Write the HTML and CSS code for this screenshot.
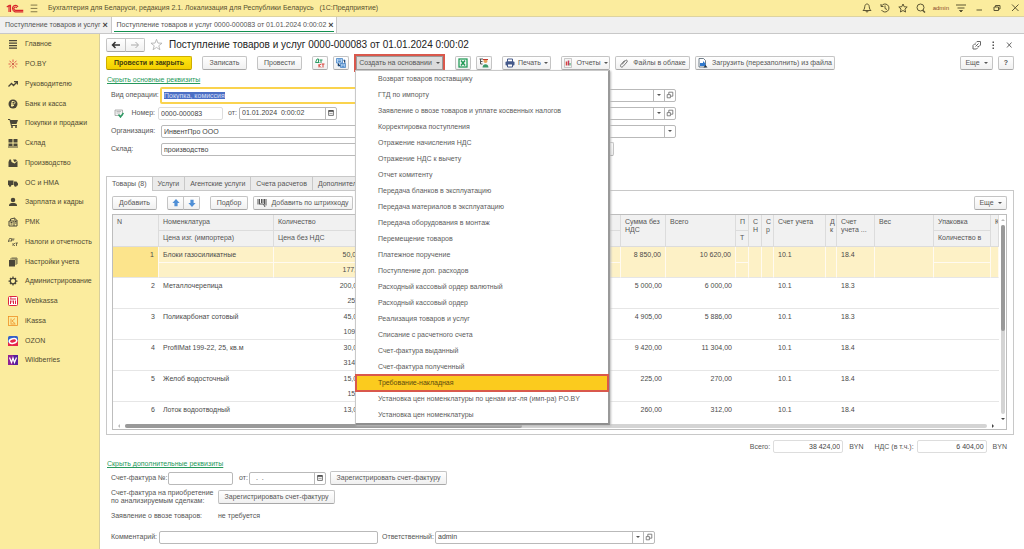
FILE: index.html
```html
<!DOCTYPE html>
<html lang="ru">
<head>
<meta charset="utf-8">
<title>Поступление товаров и услуг</title>
<link rel="stylesheet" href="styles.css">
</head>
<body>
<header class="titlebar">
  <svg class="logo" viewBox="0 0 48 24" fill="none" stroke="#d8232a" stroke-width="3"><path d="M2 8l6-4v17M12 8V4l-4 2M12 5v16M32 8c-2-4-6-5-9-4-8 3-7 15 1 17h22M29 10c-5-5-10 1-7 5 1 2 3 2 4 2h20"/></svg>
  <svg class="i12" viewBox="0 0 12 12" stroke="#6b6238"><path d="M2 2.500h8M2 6.500h8M2 10.500h8"/></svg>
  <span class="apptitle">Бухгалтерия для Беларуси, редакция 2.1. Локализация для Республики Беларусь &nbsp; (1С:Предприятие)</span>
  <span class="grow"></span>
  <div class="sys">
    <svg class="i10" viewBox="0 0 20 20" fill="none" stroke="#5d5633" stroke-width="2"><path d="M2 15h16c-4-3-3-7-4-10-1-4-7-4-8 0-1 3 0 7-4 10zM8 16c0 3 4 3 4 0"/></svg>
    <svg class="i10" viewBox="0 0 20 20" fill="none" stroke="#5d5633" stroke-width="2"><path d="M3 6a8 8 0 1 1 0 8M2 2v5h5M10 5v6l4 2"/></svg>
    <svg class="i10" viewBox="0 0 20 20" fill="none" stroke="#5d5633" stroke-width="2"><path d="M10 2l2.400 5.500 6 .6-4.500 4 1.300 6L10 15l-5.200 3 1.300-6-4.500-4 6-.6z"/></svg>
    <svg class="i10" viewBox="0 0 20 20" fill="none" stroke="#5d5633" stroke-width="2"><circle cx="9" cy="9" r="7"/><path d="M13 14l5 5" stroke-width="3"/></svg>
    <span class="user">admin</span>
    <svg class="i10" viewBox="0 0 20 20" stroke="#5d5633" stroke-width="2"><path d="M0 4h20M3 10h14"/><path d="M7 15h6l-3 3z" fill="#5d5633"/></svg>
    <svg class="i10" viewBox="0 0 20 20" stroke="#5d5633" stroke-width="2"><path d="M5 14h11"/></svg>
    <svg class="i10" viewBox="0 0 20 20" fill="none" stroke="#5d5633" stroke-width="2"><path d="M4 8h9v7H4zM7 8V5h9v7h-3"/></svg>
    <svg class="i10" viewBox="0 0 20 20" stroke="#5d5633" stroke-width="2"><path d="M4 3l13 13M17 3L4 16"/></svg>
  </div>
</header>
<div class="tabs">
  <div class="tab"><span>Поступление товаров и услуг</span><button class="close" aria-label="Закрыть">×</button></div>
  <div class="tab active"><span>Поступление товаров и услуг 0000-000083 от 01.01.2024 0:00:02</span><button class="close" aria-label="Закрыть">×</button></div>
</div>
<div class="layout">
<nav class="side">
  <a href="#"><svg viewBox="0 0 20 20" stroke="#4a4638" stroke-width="2.500"><path d="M2 3h16M2 8h16M2 13h16M2 18h16"/></svg>Главное</a>
  <a href="#"><svg viewBox="0 0 20 20" stroke="#e05a4a" stroke-width="2"><path d="M10 1v5M10 14v5M1 10h4M15 10h4M3 4l4 3M13 13l4 3M17 4l-4 3M3 16l4-3"/><circle cx="10" cy="10" r="1.500"/></svg>PO.BY</a>
  <a href="#"><svg viewBox="0 0 20 20" fill="none" stroke="#4a4638" stroke-width="2.500"><path d="M1 15l6-6 4 4 7-7M12 5h7v6"/></svg>Руководителю</a>
  <a href="#"><svg viewBox="0 0 20 20"><circle cx="10" cy="10" r="9" fill="#4a4638"/><path d="M8 16V5h3c4 0 4 5 0 5H6M6 13h6" fill="none" stroke="#fbec9e" stroke-width="2"/></svg>Банк и касса</a>
  <a href="#"><svg viewBox="0 0 20 20" fill="#4a4638"><path d="M0 2h4l1 2h15l-3 8H7l1 2h10v2H6L3 4H0z"/><circle cx="8" cy="18" r="2"/><circle cx="16" cy="18" r="2"/></svg>Покупки и продажи</a>
  <a href="#"><svg viewBox="0 0 20 20" fill="#4a4638"><path d="M1 2h8v7H1zM11 2h8v7h-8zM1 11h8v5H1zM11 11h8v5h-8zM0 17h20v2H0z"/></svg>Склад</a>
  <a href="#"><svg viewBox="0 0 20 20" fill="#4a4638"><path d="M1 18V8l2-5h3l1 5 6 3 6-5v12zM10 3h6l2 3-5 2z"/></svg>Производство</a>
  <a href="#"><svg viewBox="0 0 20 20" fill="#4a4638"><path d="M0 5h11v9H0zM12 7h5l3 4v4h-8z"/><circle cx="4" cy="15" r="2.500"/><circle cx="15" cy="15" r="2.500"/></svg>ОС и НМА</a>
  <a href="#"><svg viewBox="0 0 20 20" fill="#4a4638"><circle cx="10" cy="6" r="4.500"/><path d="M2 18c0-6 4-6 8-6s8 0 8 6z"/></svg>Зарплата и кадры</a>
  <a href="#"><svg viewBox="0 0 20 20" fill="none" stroke="#4a4638" stroke-width="2"><path d="M2 8h10v10H2zM5 8V4l9-2v3M12 6h6v12h-6M5 11h4M5 14h4M14 9h3M14 12h3"/></svg>РМК</a>
  <a href="#"><svg viewBox="0 0 20 20" fill="none" stroke="#4a4638" stroke-width="1.500"><path d="M1 10V8l2-5h4v5M1 8h7M8 4h5M10 4v4M10 12v6M14 12l-3 3 3 3M15 12h5M17 12v6"/></svg>Налоги и отчетность</a>
  <a href="#"><svg viewBox="0 0 20 20" fill="#4a4638"><path d="M2 6h12v13H2z"/><path d="M4 4h12v12M7 2h11v12" fill="none" stroke="#4a4638" stroke-width="1.500"/></svg>Настройки учета</a>
  <a href="#"><svg viewBox="0 0 20 20" fill="none" stroke="#4a4638"><circle cx="10" cy="10" r="5.500" stroke-width="2.500"/><path d="M10 1v3M10 16v3M1 10h3M16 10h3M4 4l2 2M14 14l2 2M16 4l-2 2M4 16l2-2" stroke-width="2.500"/></svg>Администрирование</a>
  <a href="#"><svg viewBox="0 0 20 20"><rect x="1" y="1" width="18" height="18" rx="2" fill="#fff" stroke="#dc2440" stroke-width="2"/><path d="M4 6h12M5 9v7M8 9v4M11 9v7M15 9v7M4 4h3" stroke="#dc2440" stroke-width="2"/></svg>Webkassa</a>
  <a href="#"><svg viewBox="0 0 20 20" fill="none" stroke="#ee8a1c"><rect x="1" y="1" width="18" height="18" stroke-width="1.500"/><path d="M6 5v10M14 5l-6 5 6 5M5 16h10" stroke-width="1.500"/></svg>iKassa</a>
  <a href="#"><svg viewBox="0 0 20 20"><rect width="20" height="20" rx="3" fill="#3560c8"/><path d="M0 13l20-4v11H0z" fill="#e6244a"/><ellipse cx="10" cy="10" rx="7.500" ry="4.500" fill="#e6244a" stroke="#fff" stroke-width="3" transform="rotate(-12 10 10)"/></svg>OZON</a>
  <a href="#"><svg viewBox="0 0 20 20"><rect width="20" height="20" fill="#8e2196"/><path d="M10 0h10v20H10z" fill="#5a1f9c"/><path d="M3 5l4 10 3-9 3 9 4-10" fill="none" stroke="#fff" stroke-width="2.500"/></svg>Wildberries</a>
</nav>
<main class="main">
  <div class="heading">
    <div class="pair"><button class="btn" aria-label="Назад"><svg class="i10" viewBox="0 0 20 20" fill="none" stroke="#333" stroke-width="3"><path d="M18 10H4M9 4l-6 6 6 6"/></svg></button><button class="btn" aria-label="Вперед"><svg class="i10" viewBox="0 0 20 20" fill="none" stroke="#aaa" stroke-width="2"><path d="M2 10h14M11 4l6 6-6 6"/></svg></button></div>
    <svg class="star" viewBox="0 0 20 20" fill="none" stroke="#b0b0b0" stroke-width="1.300"><path d="M10 2l2.200 5.800 6.300.2-5 3.900 1.800 6.100L10 14.500 4.700 18l1.800-6.100-5-3.900 6.300-.2z"/></svg>
    <h1>Поступление товаров и услуг 0000-000083 от 01.01.2024 0:00:02</h1>
    <span class="grow"></span>
    <div class="winicons">
      <svg class="i10" viewBox="0 0 20 20" fill="none" stroke="#666" stroke-width="2"><path d="M8 5l2-2h7v7l-3 3h-3M12 15l-3 3H2v-7l3-3h3M7 13l6-6"/></svg>
      <svg class="i10" viewBox="0 0 20 20" fill="#555"><path d="M9 3h3v3H9zM9 9h3v3H9zM9 15h3v3H9z"/></svg>
      <svg class="i10" viewBox="0 0 20 20" stroke="#666" stroke-width="2"><path d="M6 5l9 10M15 5L6 15"/></svg>
    </div>
  </div>
  <div class="toolbar">
    <button class="btn primary w86">Провести и закрыть</button>
    <button class="btn w45 ml">Записать</button>
    <button class="btn w45 ml">Провести</button>
    <button class="btn sq ml" aria-label="Проводки"><svg class="i10" viewBox="0 0 20 20" fill="none" stroke-width="2"><path d="M1 9l3-7h3v7M1 9h8M9 4h6M12 4v6" stroke="#2a9b63"/><path d="M8 12v7M12 12l-4 3 4 4M13 12h6M16 12v7" stroke="#d8433a"/></svg></button>
    <button class="btn sq" aria-label="Структура"><svg class="i10" viewBox="0 0 20 20" stroke="#3f7fc4" stroke-width="1.500"><path d="M1 1h12v9H1zM9 11h10v8H9z" fill="#bcd8f2"/><path d="M4 4h6M4 7h6M4 10v6h5M15 4h3v7M11 14h6M11 17h6"/></svg></button>
    <div class="dropdown">
      <button class="btn pressed" aria-expanded="true">Создать на основании<i class="caret"></i></button>
      <div class="menu" role="menu">
        <button role="menuitem">Возврат товаров поставщику</button>
        <button role="menuitem">ГТД по импорту</button>
        <button role="menuitem">Заявление о ввозе товаров и уплате косвенных налогов</button>
        <button role="menuitem">Корректировка поступления</button>
        <button role="menuitem">Отражение начисления НДС</button>
        <button role="menuitem">Отражение НДС к вычету</button>
        <button role="menuitem">Отчет комитенту</button>
        <button role="menuitem">Передача бланков в эксплуатацию</button>
        <button role="menuitem">Передача материалов в эксплуатацию</button>
        <button role="menuitem">Передача оборудования в монтаж</button>
        <button role="menuitem">Перемещение товаров</button>
        <button role="menuitem">Платежное поручение</button>
        <button role="menuitem">Поступление доп. расходов</button>
        <button role="menuitem">Расходный кассовый ордер валютный</button>
        <button role="menuitem">Расходный кассовый ордер</button>
        <button role="menuitem">Реализация товаров и услуг</button>
        <button role="menuitem">Списание с расчетного счета</button>
        <button role="menuitem">Счет-фактура выданный</button>
        <button role="menuitem">Счет-фактура полученный</button>
        <button role="menuitem" class="current">Требование-накладная</button>
        <button role="menuitem">Установка цен номенклатуры по ценам изг-ля (имп-ра) PO.BY</button>
        <button role="menuitem">Установка цен номенклатуры</button>
      </div>
    </div>
    <button class="btn sq ml" aria-label="Excel"><svg class="i10" viewBox="0 0 20 20" fill="none" stroke="#1f9a55"><rect x="2" y="2" width="16" height="16" stroke-width="2.500"/><path d="M6 5l8 10M14 5L6 15" stroke-width="3"/></svg></button>
    <button class="btn sq" aria-label="Контрагент"><svg class="i10" viewBox="0 0 20 20"><path d="M1 2h7M3 2v10h4M3 7h4" stroke="#555" stroke-width="2" fill="none"/><circle cx="13" cy="6" r="4" fill="#e8a15a"/><path d="M8 3h10" stroke="#c23a2e" stroke-width="2"/><path d="M7 19c0-9 12-9 12 0z" fill="#3a9a68"/></svg></button>
    <button class="btn w49 ml"><svg class="i10" viewBox="0 0 20 20"><path d="M5 2h10v6H5z" fill="#fff" stroke="#44598a" stroke-width="2"/><rect x="1" y="7" width="18" height="8" rx="2" fill="#44598a"/><path d="M5 12h10v6H5z" fill="#fff" stroke="#44598a" stroke-width="2"/></svg>Печать<i class="caret"></i></button>
    <button class="btn w49 ml"><svg class="i10" viewBox="0 0 20 20"><path d="M3 1h14v18H3z" fill="#f4f4f4" stroke="#999"/><path d="M7 7v8" stroke="#d8433a" stroke-width="3"/><path d="M11 5v10" stroke="#c23a5e" stroke-width="3"/><path d="M14 10v5" stroke="#2a9b63" stroke-width="2"/></svg>Отчеты<i class="caret"></i></button>
    <button class="btn w75"><svg class="i10" viewBox="0 0 20 20" fill="none" stroke="#666" stroke-width="1.800"><path d="M6 13l7-8c2-2 5 0 3 3l-8 9c-3 3-7 0-4-4l7-8"/></svg>Файлы в облаке</button>
    <button class="btn w140"><svg class="i10" viewBox="0 0 20 20"><path d="M2 1h9l4 4v13H2z" fill="#fff" stroke="#456" stroke-width="1.500"/><path d="M4 10h6V6l5 5v5H4z" fill="#2f78cc"/><path d="M11 19l4-5 4 5z" fill="#234"/></svg>Загрузить (перезаполнить) из файла</button>
    <span class="grow"></span>
    <button class="btn w33">Еще<i class="caret"></i></button>
    <button class="btn sq"><b>?</b></button>
  </div>

  <a class="link" href="#">Скрыть основные реквизиты</a>
  <div class="form">
    <div class="frow">
      <label for="op">Вид операции:</label>
      <input id="op" class="inp focus" value="Покупка, комиссия">
      <div class="combo right"><input aria-label="Контрагент"><button aria-label="Выбрать"><i class="caret"></i></button><button aria-label="Открыть"><svg viewBox="0 0 10 10" fill="none" stroke="#666"><path d="M1.500 4.500h4v4h-4zM3.500 4V1.500h5v5H6"/></svg></button></div>
    </div>
    <div class="frow">
      <div class="numlabel"><svg class="i10" viewBox="0 0 20 20"><path d="M2 4h15v11H2z" fill="#f3f3f3" stroke="#999" stroke-width="1.500"/><path d="M5 7h9M5 10h7" stroke="#888"/><path d="M9 13l4 5 6-8" fill="none" stroke="#2a9b63" stroke-width="3"/></svg><label for="num">Номер:</label></div>
      <input id="num" class="inp soft num" value="0000-000083">
      <label class="ot" for="date">от:</label>
      <div class="combo date"><input id="date" value="01.01.2024  0:00:02"><button aria-label="Календарь"><svg viewBox="0 0 10 10"><path d="M2 2h6v6H2z" fill="none" stroke="#555"/><path d="M2 2.500h6" stroke="#444" stroke-width="2"/><path d="M3 5.500h4" stroke="#888"/></svg></button></div>
      <div class="combo right"><input aria-label="Договор"><button aria-label="Выбрать"><i class="caret"></i></button><button aria-label="Открыть"><svg viewBox="0 0 10 10" fill="none" stroke="#666"><path d="M1.500 4.500h4v4h-4zM3.500 4V1.500h5v5H6"/></svg></button></div>
    </div>
    <div class="frow">
      <label for="org">Организация:</label>
      <input id="org" class="inp wide" value="ИнвентПро ООО">
      <div class="combo right"><input aria-label="Счет"><button aria-label="Выбрать"><i class="caret"></i></button></div>
    </div>
    <div class="frow">
      <label for="store">Склад:</label>
      <input id="store" class="inp wide" value="производство">
      <button class="btn prices" aria-label="Цены"></button>
    </div>
  </div>

  <div class="ptabs" role="tablist">
    <button class="on" role="tab">Товары (8)</button><button role="tab">Услуги</button><button role="tab">Агентские услуги</button><button role="tab">Счета расчетов</button><button role="tab">Дополнительно</button>
  </div>
  <section class="panel">
    <div class="pbar">
      <button class="btn w45">Добавить</button>
      <div class="pair arrows"><button class="btn" aria-label="Вверх"><svg class="i8" viewBox="0 0 10 10" fill="#4f8fd6"><path d="M5 0l4.500 5H7v4H3V5H.5z"/></svg></button><button class="btn" aria-label="Вниз"><svg class="i8" viewBox="0 0 10 10" fill="#4f8fd6"><path d="M5 10L.5 5H3V1h4v4h2.500z"/></svg></button></div>
      <button class="btn w38">Подбор</button>
      <button class="btn w100"><svg class="i10" viewBox="0 0 20 20" stroke="#555" stroke-width="2"><path d="M2 2v11M5 2v11M9 2v8M12 2v8M15 2v11M18 2v13" /><path d="M6 12h7l3 6" fill="none"/></svg>Добавить по штрихкоду</button>
      <span class="grow"></span>
      <button class="btn w33">Еще<i class="caret"></i></button>
    </div>
    <div class="gridbox">
      <div class="gridtop">
        <div class="clip">
        <table>
          <colgroup><col class="c46"><col class="c115"><col class="c95"><col><col class="c45"><col class="c70"><col class="c13"><col class="c13"><col class="c12"><col class="c52"><col class="c11"><col class="c38"><col class="c59"><col class="c57"><col class="c8"></colgroup>
          <thead>
            <tr><th rowspan="2">N</th><th>Номенклатура</th><th>Количество</th><th></th><th rowspan="2">Сумма без НДС</th><th rowspan="2">Всего</th><th>П</th><th rowspan="2">С<br>Н</th><th rowspan="2">С<br>р</th><th rowspan="2">Счет учета</th><th rowspan="2">Д<br>к</th><th rowspan="2">Счет учета ...</th><th rowspan="2">Вес</th><th>Упаковка</th><th rowspan="2">К</th></tr>
            <tr><th>Цена изг. (импортера)</th><th>Цена без НДС</th><th></th><th>Т</th><th>Количество в</th></tr>
          </thead>
          <tbody>
            <tr class="sel"><td class="n">1</td><td class="two">Блоки газосиликатные</td><td class="two n">50,000<br>177,00</td><td class="two"></td><td class="n">8 850,00</td><td class="n">10 620,00</td><td class="two"></td><td></td><td></td><td>10.1</td><td></td><td>18.4</td><td></td><td class="two"></td><td></td></tr>
            <tr><td class="n">2</td><td>Металлочерепица</td><td class="n">200,000<br>25,00</td><td></td><td class="n">5 000,00</td><td class="n">6 000,00</td><td></td><td></td><td></td><td>10.1</td><td></td><td>18.3</td><td></td><td></td><td></td></tr>
            <tr><td class="n">3</td><td>Поликарбонат сотовый</td><td class="n">45,000<br>109,00</td><td></td><td class="n">4 905,00</td><td class="n">5 886,00</td><td></td><td></td><td></td><td>10.1</td><td></td><td>18.3</td><td></td><td></td><td></td></tr>
            <tr><td class="n">4</td><td>ProfilMat 199-22, 25, кв.м</td><td class="n">30,000<br>314,00</td><td></td><td class="n">9 420,00</td><td class="n">11 304,00</td><td></td><td></td><td></td><td>10.1</td><td></td><td>18.4</td><td></td><td></td><td></td></tr>
            <tr><td class="n">5</td><td>Желоб водосточный</td><td class="n">15,000<br>15,00</td><td></td><td class="n">225,00</td><td class="n">270,00</td><td></td><td></td><td></td><td>10.1</td><td></td><td>18.4</td><td></td><td></td><td></td></tr>
            <tr><td class="n">6</td><td>Лоток водоотводный</td><td class="n">13,000</td><td></td><td class="n">260,00</td><td class="n">312,00</td><td></td><td></td><td></td><td>10.1</td><td></td><td>18.4</td><td></td><td></td><td></td></tr>
          </tbody>
        </table>
        </div>
        <div class="vbar"><i class="tri up"></i><div class="vtrack"><div class="vthumb"></div></div><i class="tri down"></i></div>
      </div>
      <div class="hbar"><i class="tri left"></i><div class="htrack"><div class="hthumb"></div></div><i class="tri rightt"></i></div>
    </div>
  </section>

  <div class="totals">
    <label for="total">Всего:</label><input id="total" class="inp soft" value="38 424,00"><span class="cur">BYN</span>
    <label for="vat">НДС (в т.ч.):</label><input id="vat" class="inp soft" value="6 404,00"><span class="cur">BYN</span>
  </div>
  <a class="link" href="#">Скрыть дополнительные реквизиты</a>
  <div class="extra">
    <div class="erow"><label for="sf">Счет-фактура №:</label><input id="sf" class="inp sf"><label for="sfd" class="ot2">от:</label><div class="combo edate"><input id="sfd" value="  .  ."><button aria-label="Календарь"><svg viewBox="0 0 10 10"><path d="M2 2h6v6H2z" fill="none" stroke="#555"/><path d="M2 2.500h6" stroke="#444" stroke-width="2"/><path d="M3 5.500h4" stroke="#888"/></svg></button></div><button class="btn w117">Зарегистрировать счет-фактуру</button></div>
    <div class="erow"><span class="elabel">Счет-фактура на приобретение<br>по анализируемым сделкам:</span><button class="btn w117">Зарегистрировать счет-фактуру</button></div>
    <div class="erow"><span class="elabel">Заявление о ввозе товаров:</span><span class="val">не требуется</span></div>
    <div class="erow last"><label for="com" class="coml">Комментарий:</label><input id="com" class="inp com"><label for="resp" class="respl">Ответственный:</label><div class="combo resp"><input id="resp" value="admin"><button aria-label="Выбрать"><i class="caret"></i></button><button aria-label="Открыть"><svg viewBox="0 0 10 10" fill="none" stroke="#666"><path d="M1.500 4.500h4v4h-4zM3.500 4V1.500h5v5H6"/></svg></button></div></div>
  </div>
</main>
</div>
<script src="app.js"></script>
</body>
</html>
```
FILE: app.js
```js
const operation = document.getElementById('op');
operation.focus();
operation.select();
```
FILE: styles.css
```css
* { box-sizing: border-box; }
body { margin: 0; min-height: 100vh; display: flex; flex-direction: column; background: #fff; color: #555; font: 7px/8px "Liberation Sans", Arial, sans-serif; }
button, input { font: inherit; color: inherit; margin: 0; padding: 0; border: 0; background: none; border-radius: 0; min-width: 0; }
input { outline: none; }
svg { display: block; flex: none; }
.grow { flex: 1; }
.i8 { width: 8px; height: 8px; }
.i10 { width: 10px; height: 10px; }
.i12 { width: 12px; height: 10px; }

.titlebar { display: flex; align-items: center; height: 17px; padding: 0 4px 0 6px; background: #fbec9e; border-bottom: 1px solid #ddd3a0; color: #57502f; }
.logo { width: 18px; height: 9px; margin-right: 4px; }
.apptitle { margin-left: 8px; }
.sys { display: flex; align-items: center; gap: 8px; }
.user { font-size: 6px; color: #8a4a2a; margin: 0 -1px; }

.tabs { display: flex; height: 17px; background: #f0f0f0; border-bottom: 1px solid #c8c8c8; }
.tab { display: flex; align-items: center; gap: 1px; padding: 0 2px 0 5px; border-right: 1px solid #c8c8c8; position: relative; }
.tab.active { background: #fff; }
.tab.active::after { content: ""; position: absolute; left: 2px; right: 2px; bottom: 1px; height: 1px; background: #12904f; }
.close { width: 7px; font-size: 9px; font-weight: bold; color: #444; }

.layout { flex: 1; display: flex; }
.side { flex: none; width: 100px; background: #fbec9e; border-right: 1px solid #d8cf9c; }
.side a { display: flex; align-items: center; gap: 7px; height: 20px; padding-left: 8px; color: #4f4931; text-decoration: none; }
.side a:nth-child(4n) { height: 19px; }
.side svg { width: 10px; height: 10px; }

.main { flex: 1; min-width: 0; padding: 3px 10px 0 6px; }
.heading { display: flex; align-items: center; height: 15px; }
h1 { margin: 0; font-size: 10px; line-height: 14px; font-weight: normal; color: #222; white-space: nowrap; }
.star { width: 13px; height: 13px; margin: 0 6px 0 5px; }
.winicons { display: flex; gap: 6px; }

.btn { display: inline-flex; align-items: center; justify-content: center; gap: 4px; height: 14px; border: 1px solid #c4c4c4; border-bottom-color: #a8a8a8; border-radius: 2px; background: linear-gradient(#fff, #f0f0f0); color: #555; white-space: nowrap; flex: none; }
.caret { width: 0; height: 0; border: 2px solid transparent; border-top-color: #555; border-bottom: 0; }
.primary { background: linear-gradient(#ffe612, #f3cf00); border-color: #cfae00; border-bottom-color: #a58b00; color: #433c10; font-weight: bold; }
.sq { width: 16px; }
.w33 { width: 33px; } .w38 { width: 38px; } .w45 { width: 45px; } .w49 { width: 49px; gap: 3px; } .w75 { width: 75px; } .w86 { width: 86px; } .w100 { width: 100px; } .w117 { width: 117px; } .w140 { width: 140px; }
.pair { display: flex; }
.pair .btn { width: 20px; }
.pair .btn + .btn { margin-left: -1px; border-radius: 0 2px 2px 0; }
.pair .btn:first-child { border-radius: 2px 0 0 2px; }

.toolbar { display: flex; align-items: center; gap: 5px; height: 14px; margin-top: 4px; }
.toolbar .ml { margin-left: 5px; }
.dropdown { position: relative; width: 91px; height: 18px; border: 2px solid #d9584c; background: #d9584c; display: flex; }
.pressed { width: 87px; background: #dcdcdc; border-color: #9a9a9a; border-radius: 0; gap: 4px; }
.menu { position: absolute; z-index: 5; left: -1px; top: 14px; width: 255px; background: #fff; border: 1px solid #c9c9c9; border-right: 2px solid #999; border-bottom: 2px solid #8e8e8e; box-shadow: 1px 1px 2px #bbb; }
.menu button { display: block; width: 100%; height: 16px; padding-left: 22px; text-align: left; color: #5d5d5d; white-space: nowrap; }
.menu .current { background: #fbcb1e; outline: 2px solid #d9584c; outline-offset: -1px; color: #5b4a10; }

.link { display: block; width: max-content; margin: 6px 0 0 1px; color: #26995c; line-height: 8px; text-decoration: underline; }
.form { padding: 2px 0 0 5px; }
.frow { display: flex; align-items: center; height: 18px; }
.frow > label:first-child { width: 50px; }
.inp, .combo { height: 13px; border: 1px solid #b9b9b9; border-radius: 2px; background: #fff; color: #444; }
.inp { padding: 0 2px; }
.focus { width: 229px; height: 17px; border: 2px solid #fad34e; margin-left: -1px; }
.focus::selection { background: #4b6fc4; color: #d5def5; }
.soft { border-color: #ddd; }
.numlabel { display: flex; align-items: center; justify-content: space-between; width: 44px; margin-right: 3px; padding-left: 3px; }
.num { width: 65px; }
.ot { width: 11px; margin-left: 5px; }
.combo { display: flex; overflow: hidden; }
.combo input { flex: 1; width: 0; padding: 0 2px; white-space: pre; }
.combo button { display: flex; align-items: center; justify-content: center; width: 11px; border-left: 1px solid #b9b9b9; }
.combo svg { width: 8px; height: 8px; }
.date { width: 98px; }
.wide { width: 228px; }
.right { width: 230px; margin-left: auto; margin-right: 338px; }
.prices { width: 60px; margin-left: 165px; }

.ptabs { display: flex; margin-top: 18px; }
.ptabs button { height: 14px; padding: 0 5px; border: 1px solid #c8c8c8; border-left-width: 0; border-bottom: 0; background: #ebebeb; }
.ptabs .on { height: 15px; margin-bottom: -1px; border-left-width: 1px; background: #fff; position: relative; z-index: 1; }
.panel { border: 1px solid #c8c8c8; padding: 4px 6px 4px 5px; }
.pbar { display: flex; align-items: center; gap: 5px; height: 15px; margin-bottom: 4px; }
.arrows { margin: 0 5px; }
.arrows .btn { width: 17px; }
.gridbox { border: 1px solid #bdbdbd; }
.gridtop { display: flex; height: 207px; overflow: hidden; }
.clip { flex: 1; min-width: 0; height: 207px; overflow: hidden; }
table { width: 100%; table-layout: fixed; border-collapse: separate; border-spacing: 0; }
.c8 { width: 8px; } .c11 { width: 11px; } .c12 { width: 12px; } .c13 { width: 13px; } .c38 { width: 38px; } .c45 { width: 45px; } .c46 { width: 46px; } .c52 { width: 52px; } .c57 { width: 57px; } .c59 { width: 59px; } .c70 { width: 70px; } .c95 { width: 95px; } .c115 { width: 115px; }
th { height: 16px; padding: 3px 0 0 4px; background: #f1f1f1; border-right: 1px solid #dcdcdc; border-bottom: 1px solid #dcdcdc; font-weight: normal; text-align: left; vertical-align: top; line-height: 8px; overflow: hidden; }
td { height: 31px; padding: 0 4px; border-bottom: 1px solid #e6e6e6; line-height: 15px; vertical-align: top; color: #4a4a4a; white-space: nowrap; }
.n { text-align: right; }
.sel td { background: #fdf1c6; border-right: 1px solid #fffaf0; }
.sel td:first-child { background: #fce48c; }
.sel .two { background: linear-gradient(#fdf1c6 15px, #fffaf0 15px, #fffaf0 16px, #fdf1c6 16px); }
.vbar { display: flex; flex-direction: column; align-items: center; width: 7px; padding: 4px 0 2px; gap: 4px; }
.vtrack { flex: 1; width: 4px; border-radius: 2px; background: #d4d4d4; }
.vthumb { width: 4px; height: 56%; border-radius: 2px; background: #999; }
.hbar { display: flex; align-items: center; height: 7px; padding: 0 12px 0 5px; gap: 5px; }
.htrack { flex: 1; height: 4px; border-radius: 2px; background: #d4d4d4; }
.hthumb { width: 46%; height: 4px; border-radius: 2px; background: #999; }
.tri { width: 0; height: 0; border: 2px solid transparent; }
.up { border-bottom-color: #bbb; border-top: 0; }
.down { border-top-color: #444; border-bottom: 0; }
.left { border-right-color: #bbb; border-left: 0; }
.rightt { border-left-color: #444; border-right: 0; }

.totals { display: flex; align-items: center; justify-content: flex-end; height: 13px; margin-top: 5px; padding-right: 7px; }
.totals input { width: 70px; margin: 0 6px 0 3px; text-align: right; }
.cur + label { margin-left: 11px; }
.totals + .link { margin-top: 7px; }
.extra { padding: 3px 0 4px 5px; display: flex; flex-direction: column; gap: 4px; }
.erow { display: flex; align-items: center; min-height: 14px; }
.erow > label:first-child { width: 57px; }
.erow > .coml:first-child { width: 48px; }
.elabel { width: 107px; }
.sf { width: 65px; margin-right: 6px; }
.ot2 { width: 10px; }
.edate { width: 77px; margin-right: 4px; }
.last { margin-top: 3px; }
.com { width: 219px; margin-right: 4px; }
.respl { width: 53px; }
.resp { width: 220px; }
```
